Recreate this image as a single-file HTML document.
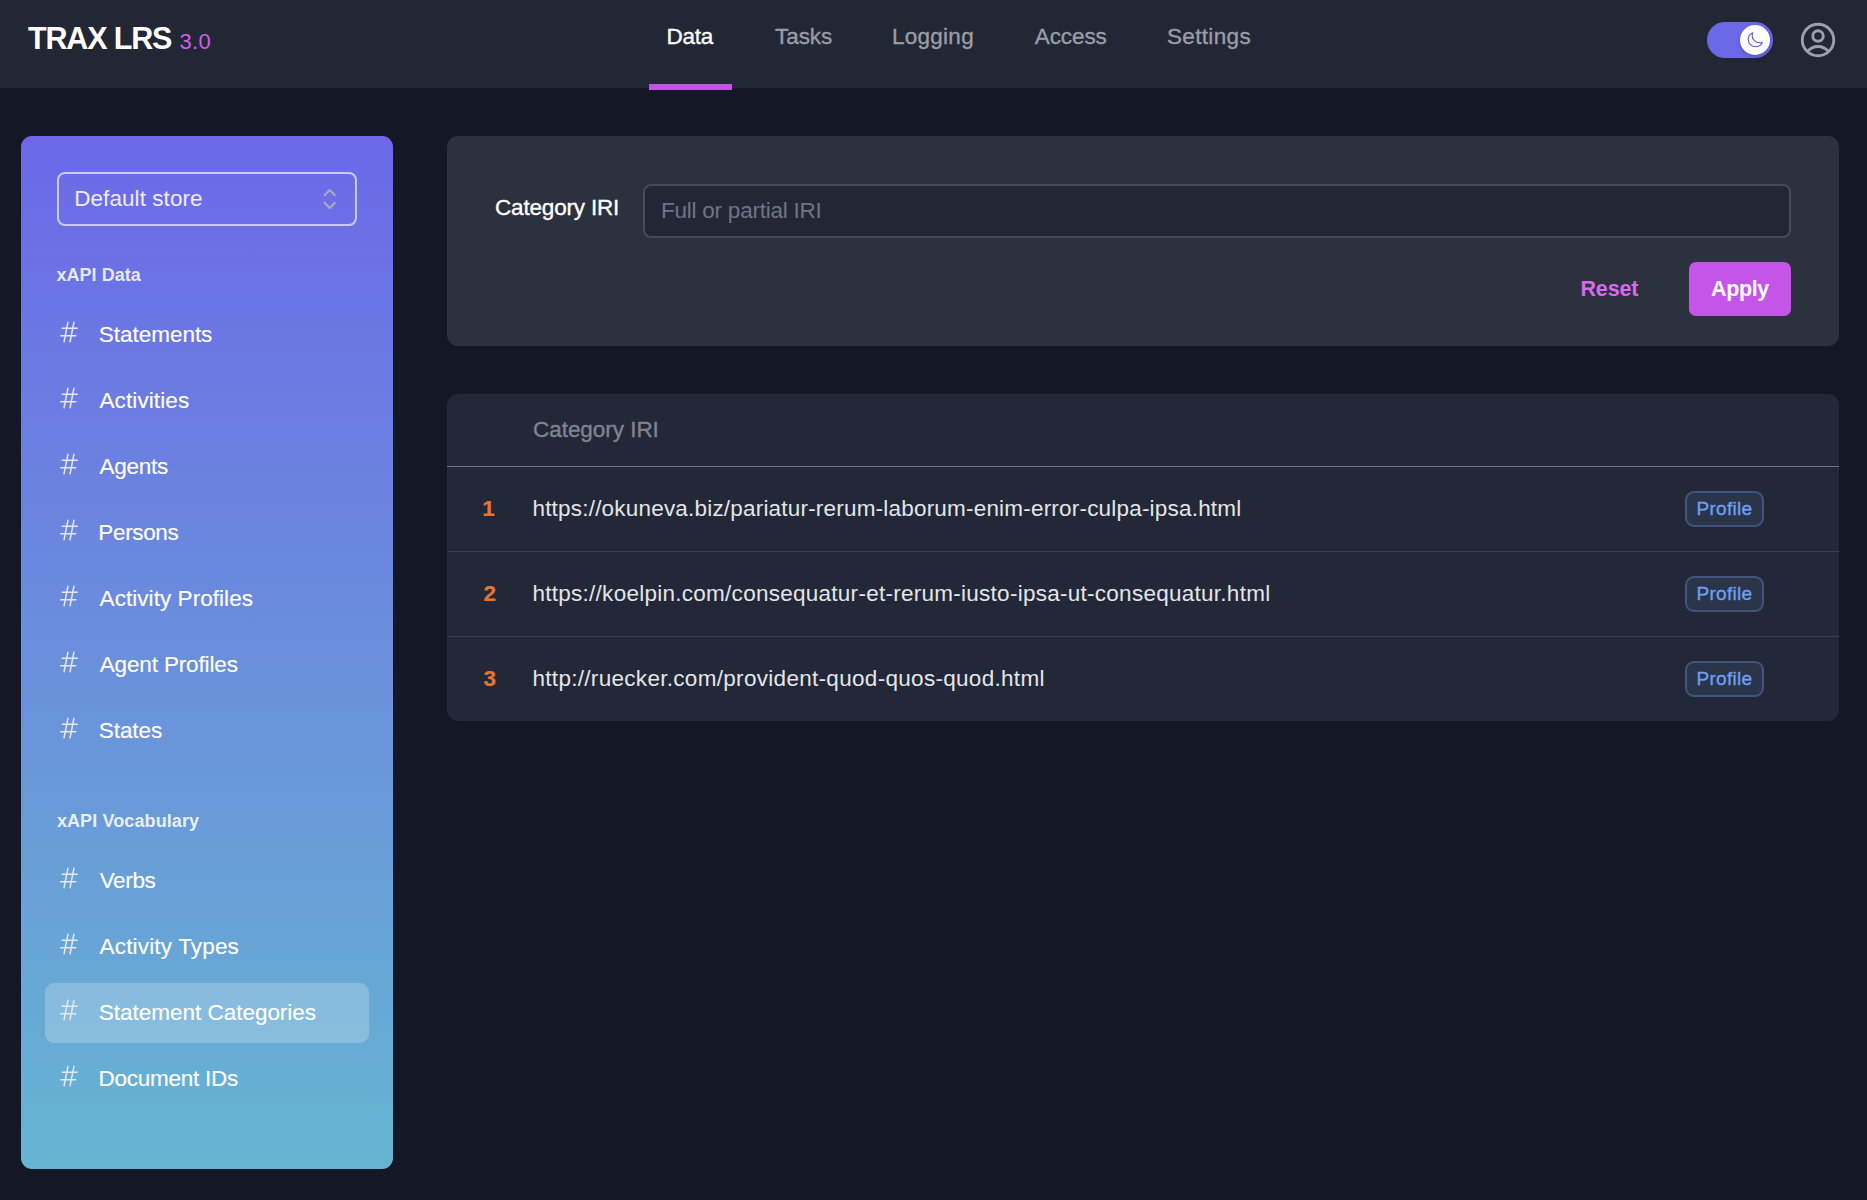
<!DOCTYPE html>
<html lang="en">
<head>
<meta charset="utf-8">
<title>TRAX LRS 3.0</title>
<style>
*{box-sizing:border-box;margin:0;padding:0}
html,body{width:1867px;height:1200px;overflow:hidden}
body{background:#141726;font-family:"Liberation Sans",sans-serif;color:#fff;position:relative}
.abs{position:absolute}
.t{position:absolute;white-space:nowrap;line-height:30px;height:30px;font-size:22px}
.m{-webkit-text-stroke:.35px currentColor}
#header{left:0;top:0;width:1867px;height:88px;background:#222736}
#underline{left:649px;top:84px;width:83px;height:6px;background:#c453e8}
.nav{color:#9a9da6;font-size:22.5px}
.nav.on{color:#fff}
#toggle{left:1707px;top:22px;width:66px;height:36px;border-radius:18px;background:#6b69e8}
#knob{left:1740px;top:25px;width:30px;height:30px;border-radius:15px;background:#fff;box-shadow:0 2px 4px rgba(0,0,0,.18)}
#sidebar{left:21px;top:136px;width:372px;height:1033px;border-radius:11px;background:linear-gradient(180deg,#6c68e8 0%,#6a8fdc 50%,#66b5d2 100%)}
#select{left:57px;top:172px;width:300px;height:54px;border-radius:8px;border:2px solid rgba(232,233,245,.74)}
.sec{font-weight:bold;font-size:18px;color:rgba(255,255,255,.86)}
.item{color:#fff;font-size:22.5px;-webkit-text-stroke:.15px currentColor}
#sel{left:45px;top:983px;width:324px;height:60px;border-radius:9px;background:rgba(255,255,255,.22)}
#filter{left:447px;top:136px;width:1392px;height:210px;border-radius:11px;background:#2c3140}
#input{left:643px;top:184px;width:1148px;height:54px;border-radius:8px;border:2px solid #464b5a;background:#222736}
#apply{left:1689px;top:262px;width:102px;height:54px;border-radius:7px;background:#c555e8}
#table{left:447px;top:394px;width:1392px;height:327px;border-radius:11px;background:#222837}
.hl{left:447px;width:1392px;height:1px;background:#3a3f4e}
.num{color:#e8752f;font-weight:bold;font-size:22.5px;-webkit-text-stroke:.2px currentColor}
.row{color:#e3e5ea;font-size:22.5px}
.badge{left:1685px;width:79px;height:36px;border-radius:9px;border:2px solid #415480;background:#2b3549}
.bt{color:#6d9ef4;font-size:19px}
</style>
</head>
<body>
<div id="header" class="abs"></div>
<span class="t" id="brand" style="left:27.97px;top:23px;letter-spacing:-1.161px;font-size:30.5px;font-weight:bold;">TRAX LRS</span>
<span class="t" id="ver" style="left:179.62px;top:27px;letter-spacing:0.220px;font-size:22px;color:#cf5ee8;">3.0</span>
<span class="t nav m on" id="n1" style="left:666.54px;top:22px;letter-spacing:-0.295px;">Data</span>
<span class="t nav m" id="n2" style="left:774.92px;top:22px;letter-spacing:-0.018px;">Tasks</span>
<span class="t nav m" id="n3" style="left:891.89px;top:22px;letter-spacing:0.283px;">Logging</span>
<span class="t nav m" id="n4" style="left:1034.73px;top:22px;letter-spacing:-0.087px;">Access</span>
<span class="t nav m" id="n5" style="left:1166.94px;top:22px;letter-spacing:0.351px;">Settings</span>
<div id="underline" class="abs"></div>
<div id="toggle" class="abs"></div>
<div id="knob" class="abs"></div>
<svg class="abs" style="left:1746px;top:31px" width="18" height="18" viewBox="0 0 24 24" fill="none" stroke="#5d55e6" stroke-width="1.4" stroke-linecap="round" stroke-linejoin="round"><path d="M21.75 15a9.7 9.7 0 0 1-3.75.75A9.75 9.75 0 0 1 8.25 6c0-1.33.27-2.6.75-3.75A9.75 9.75 0 0 0 3 11.25 9.75 9.75 0 0 0 12.75 21a9.75 9.75 0 0 0 9-6z"/></svg>
<svg class="abs" style="left:1797px;top:19px" width="42" height="42" viewBox="0 0 24 24" fill="none" stroke="#9da0aa" stroke-width="1.65" stroke-linecap="round" stroke-linejoin="round"><path d="M17.98 18.73A7.49 7.49 0 0 0 12 15.75a7.49 7.49 0 0 0-5.98 2.98m11.96 0A8.97 8.97 0 0 0 21 12a9 9 0 1 0-18 0 8.97 8.97 0 0 0 3.02 6.73m11.96 0A8.97 8.97 0 0 1 12 21a8.97 8.97 0 0 1-5.98-2.27M15 9.75a3 3 0 1 1-6 0 3 3 0 0 1 6 0z"/></svg>

<div id="sidebar" class="abs"></div>
<div id="select" class="abs"></div>
<span class="t" id="ds" style="left:74.19px;top:184px;letter-spacing:0.070px;color:#ececfb;font-size:22.5px;">Default store</span>
<svg class="abs" style="left:317.25px;top:185.1px" width="25.5" height="25.5" viewBox="0 0 20 20" fill="none" stroke="#a8abb8" stroke-width="1.7" stroke-linecap="round" stroke-linejoin="round"><path d="M6 8l4-4 4 4m0 6l-4 4-4-4"/></svg>
<span class="t sec" id="s1" style="left:56.57px;top:260px;letter-spacing:0.012px;">xAPI Data</span>
<div id="sel" class="abs"></div>
<svg class="abs" style="left:57px;top:320px" width="24" height="24" viewBox="0 0 24 24" fill="none" stroke="#e6e8f1" stroke-width="1.45" stroke-linecap="round" stroke-linejoin="round"><path d="M5.25 8.25h15m-16.5 7.5h15m-1.8-13.5l-3.9 19.5m-2.1-19.5l-3.9 19.5"/></svg><span class="t item" id="i1" style="left:98.81px;top:320px;letter-spacing:-0.028px;">Statements</span>
<svg class="abs" style="left:57px;top:386px" width="24" height="24" viewBox="0 0 24 24" fill="none" stroke="#e6e8f1" stroke-width="1.45" stroke-linecap="round" stroke-linejoin="round"><path d="M5.25 8.25h15m-16.5 7.5h15m-1.8-13.5l-3.9 19.5m-2.1-19.5l-3.9 19.5"/></svg><span class="t item" id="i2" style="left:99.52px;top:386px;letter-spacing:0.095px;">Activities</span>
<svg class="abs" style="left:57px;top:452px" width="24" height="24" viewBox="0 0 24 24" fill="none" stroke="#e6e8f1" stroke-width="1.45" stroke-linecap="round" stroke-linejoin="round"><path d="M5.25 8.25h15m-16.5 7.5h15m-1.8-13.5l-3.9 19.5m-2.1-19.5l-3.9 19.5"/></svg><span class="t item" id="i3" style="left:99.62px;top:452px;letter-spacing:-0.279px;">Agents</span>
<svg class="abs" style="left:57px;top:518px" width="24" height="24" viewBox="0 0 24 24" fill="none" stroke="#e6e8f1" stroke-width="1.45" stroke-linecap="round" stroke-linejoin="round"><path d="M5.25 8.25h15m-16.5 7.5h15m-1.8-13.5l-3.9 19.5m-2.1-19.5l-3.9 19.5"/></svg><span class="t item" id="i4" style="left:98.37px;top:518px;letter-spacing:-0.371px;">Persons</span>
<svg class="abs" style="left:57px;top:584px" width="24" height="24" viewBox="0 0 24 24" fill="none" stroke="#e6e8f1" stroke-width="1.45" stroke-linecap="round" stroke-linejoin="round"><path d="M5.25 8.25h15m-16.5 7.5h15m-1.8-13.5l-3.9 19.5m-2.1-19.5l-3.9 19.5"/></svg><span class="t item" id="i5" style="left:99.62px;top:584px;letter-spacing:0.051px;">Activity Profiles</span>
<svg class="abs" style="left:57px;top:650px" width="24" height="24" viewBox="0 0 24 24" fill="none" stroke="#e6e8f1" stroke-width="1.45" stroke-linecap="round" stroke-linejoin="round"><path d="M5.25 8.25h15m-16.5 7.5h15m-1.8-13.5l-3.9 19.5m-2.1-19.5l-3.9 19.5"/></svg><span class="t item" id="i6" style="left:99.63px;top:650px;letter-spacing:-0.132px;">Agent Profiles</span>
<svg class="abs" style="left:57px;top:716px" width="24" height="24" viewBox="0 0 24 24" fill="none" stroke="#e6e8f1" stroke-width="1.45" stroke-linecap="round" stroke-linejoin="round"><path d="M5.25 8.25h15m-16.5 7.5h15m-1.8-13.5l-3.9 19.5m-2.1-19.5l-3.9 19.5"/></svg><span class="t item" id="i7" style="left:98.80px;top:716px;letter-spacing:-0.069px;">States</span>
<span class="t sec" id="s2" style="left:56.89px;top:806px;letter-spacing:0.108px;">xAPI Vocabulary</span>
<svg class="abs" style="left:57px;top:866px" width="24" height="24" viewBox="0 0 24 24" fill="none" stroke="#e6e8f1" stroke-width="1.45" stroke-linecap="round" stroke-linejoin="round"><path d="M5.25 8.25h15m-16.5 7.5h15m-1.8-13.5l-3.9 19.5m-2.1-19.5l-3.9 19.5"/></svg><span class="t item" id="i8" style="left:99.64px;top:866px;letter-spacing:-0.333px;">Verbs</span>
<svg class="abs" style="left:57px;top:932px" width="24" height="24" viewBox="0 0 24 24" fill="none" stroke="#e6e8f1" stroke-width="1.45" stroke-linecap="round" stroke-linejoin="round"><path d="M5.25 8.25h15m-16.5 7.5h15m-1.8-13.5l-3.9 19.5m-2.1-19.5l-3.9 19.5"/></svg><span class="t item" id="i9" style="left:99.62px;top:932px;letter-spacing:0.162px;">Activity Types</span>
<svg class="abs" style="left:57px;top:998px" width="24" height="24" viewBox="0 0 24 24" fill="none" stroke="#e6e8f1" stroke-width="1.45" stroke-linecap="round" stroke-linejoin="round"><path d="M5.25 8.25h15m-16.5 7.5h15m-1.8-13.5l-3.9 19.5m-2.1-19.5l-3.9 19.5"/></svg><span class="t item" id="i10" style="left:98.83px;top:998px;letter-spacing:-0.020px;">Statement Categories</span>
<svg class="abs" style="left:57px;top:1064px" width="24" height="24" viewBox="0 0 24 24" fill="none" stroke="#e6e8f1" stroke-width="1.45" stroke-linecap="round" stroke-linejoin="round"><path d="M5.25 8.25h15m-16.5 7.5h15m-1.8-13.5l-3.9 19.5m-2.1-19.5l-3.9 19.5"/></svg><span class="t item" id="i11" style="left:98.42px;top:1064px;letter-spacing:-0.245px;">Document IDs</span>

<div id="filter" class="abs"></div>
<span class="t m" id="lab" style="left:495.05px;top:193px;letter-spacing:-0.191px;font-size:22.5px;color:#fff;">Category IRI</span>
<div id="input" class="abs"></div>
<span class="t" id="ph" style="left:660.95px;top:196px;letter-spacing:-0.229px;font-size:22.5px;color:#6f7585;">Full or partial IRI</span>
<span class="t" id="reset" style="left:1580.44px;top:274px;letter-spacing:-0.129px;font-size:21.5px;font-weight:bold;color:#d76bec;">Reset</span>
<div id="apply" class="abs"></div>
<span class="t" id="applyt" style="left:1711.10px;top:274px;letter-spacing:-0.378px;font-size:21.5px;font-weight:bold;color:#fff;">Apply</span>

<div id="table" class="abs"></div>
<span class="t m" id="th" style="left:533.00px;top:415px;letter-spacing:-0.040px;font-size:22.5px;color:#80848f;">Category IRI</span>
<div class="abs hl" style="top:466px;background:#6d7381"></div>
<div class="abs hl" style="top:551px"></div>
<div class="abs hl" style="top:636px"></div>
<span class="t num" id="k1" style="left:482.17px;top:494px;">1</span>
<span class="t row" id="r1" style="left:532.46px;top:494px;letter-spacing:0.199px;">https://okuneva.biz/pariatur-rerum-laborum-enim-error-culpa-ipsa.html</span>
<div class="abs badge" style="top:491px"></div><span class="t bt m" id="b1" style="left:1696.57px;top:494px;letter-spacing:0.268px;">Profile</span>
<span class="t num" id="k2" style="left:483.51px;top:579px;">2</span>
<span class="t row" id="r2" style="left:532.46px;top:579px;letter-spacing:0.266px;">https://koelpin.com/consequatur-et-rerum-iusto-ipsa-ut-consequatur.html</span>
<div class="abs badge" style="top:576px"></div><span class="t bt m" id="b2" style="left:1696.57px;top:579px;letter-spacing:0.268px;">Profile</span>
<span class="t num" id="k3" style="left:483.56px;top:664px;">3</span>
<span class="t row" id="r3" style="left:532.46px;top:664px;letter-spacing:0.303px;">http://ruecker.com/provident-quod-quos-quod.html</span>
<div class="abs badge" style="top:661px"></div><span class="t bt m" id="b3" style="left:1696.57px;top:664px;letter-spacing:0.268px;">Profile</span>
</body>
</html>
